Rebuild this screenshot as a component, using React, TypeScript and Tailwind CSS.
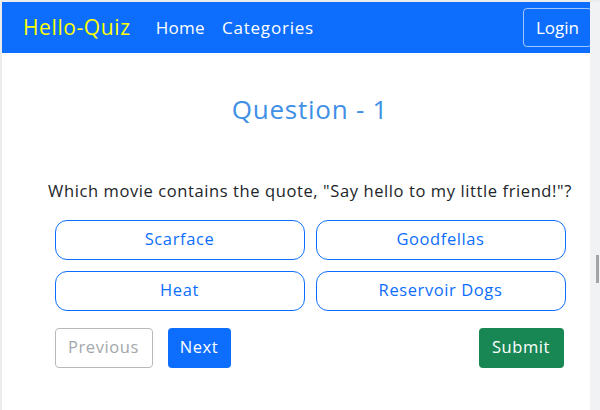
export default function App() {
  const options = ['Scarface', 'Goodfellas', 'Heat', 'Reservoir Dogs']

  return (
    <div
      className="flex h-[410px] w-[600px] overflow-hidden bg-[#ececec] pl-[2px] pt-[2px]"
      style={{ fontFamily: '"Open Sans", Arial, sans-serif' }}
    >
      {/* page */}
      <div className="h-full w-[588px] overflow-hidden bg-white">
        <div className="w-[616px]">
          {/* Navbar */}
          <nav className="flex h-[51px] items-center justify-between bg-[#0d6efd] pl-[21px] pr-[26px]">
            <div className="flex items-center">
              <span className="text-[21px] tracking-[0.6px] text-[#ffff00]">Hello-Quiz</span>
              <span className="ml-[25px] text-[17px] tracking-[0.3px] text-white">Home</span>
              <span className="ml-[17px] text-[17px] tracking-[0.8px] text-white">Categories</span>
            </div>
            <button className="h-[39px] rounded-[4px] border border-white/60 px-[12px] text-[17px] text-white">
              Login
            </button>
          </nav>

          {/* Question */}
          <div className="flex flex-col items-center tracking-[0.6px]">
            <h1 className="mt-[37px] text-[26px] tracking-[0.75px] text-[#4090e6]">Question - 1</h1>
            <p className="mt-[50px] text-[16.5px] text-[#212529]">
              Which movie contains the quote, "Say hello to my little friend!"?
            </p>
            <div className="mt-[16px] grid w-[511px] grid-cols-2 gap-[11px]">
              {options.map(opt => (
                <button
                  key={opt}
                  className="h-[40px] rounded-[12px] border border-[#0d6efd] text-[16.5px] text-[#0d6efd]"
                >
                  {opt}
                </button>
              ))}
            </div>
            <div className="mt-[17px] flex w-[511px] items-center pr-[2px]">
              <button className="h-[40px] w-[98px] rounded-[4px] border border-[#b5b9bd] text-[16.5px] text-[#a3a7ab]">
                Previous
              </button>
              <button className="ml-[15px] h-[40px] w-[63px] rounded-[4px] bg-[#0d6efd] text-[16.5px] text-white">
                Next
              </button>
              <button className="ml-auto h-[40px] w-[85px] rounded-[4px] bg-[#198754] text-[16.5px] text-white">
                Submit
              </button>
            </div>
          </div>
        </div>
      </div>

      {/* scrollbar */}
      <div className="relative h-full w-[10px] bg-[#f1f2f4]">
        <div className="absolute left-[6px] top-[253px] h-[28px] w-[3px] bg-[#a4a4a4]" />
      </div>
    </div>
  )
}
